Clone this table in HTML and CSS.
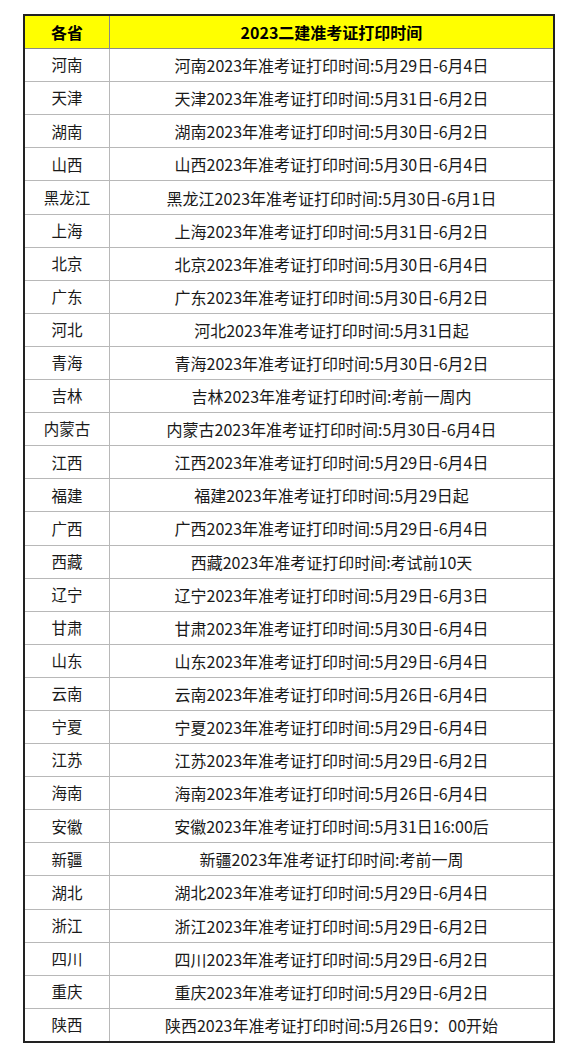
FILE: index.html
```html
<!DOCTYPE html>
<html lang="zh-CN">
<head>
<meta charset="utf-8">
<title>2023二建准考证打印时间</title>
<link rel="stylesheet" href="styles.css">
</head>
<body>
<table class="sheet">
  <thead>
    <tr class="head"><th class="prov">各省</th><th class="info">2023二建准考证打印时间</th></tr>
  </thead>
  <tbody>
    <tr><td class="prov">河南</td><td class="info">河南2023年准考证打印时间:5月29日-6月4日</td></tr>
    <tr><td class="prov">天津</td><td class="info">天津2023年准考证打印时间:5月31日-6月2日</td></tr>
    <tr><td class="prov">湖南</td><td class="info">湖南2023年准考证打印时间:5月30日-6月2日</td></tr>
    <tr><td class="prov">山西</td><td class="info">山西2023年准考证打印时间:5月30日-6月4日</td></tr>
    <tr><td class="prov">黑龙江</td><td class="info">黑龙江2023年准考证打印时间:5月30日-6月1日</td></tr>
    <tr><td class="prov">上海</td><td class="info">上海2023年准考证打印时间:5月31日-6月2日</td></tr>
    <tr><td class="prov">北京</td><td class="info">北京2023年准考证打印时间:5月30日-6月4日</td></tr>
    <tr><td class="prov">广东</td><td class="info">广东2023年准考证打印时间:5月30日-6月2日</td></tr>
    <tr><td class="prov">河北</td><td class="info">河北2023年准考证打印时间:5月31日起</td></tr>
    <tr><td class="prov">青海</td><td class="info">青海2023年准考证打印时间:5月30日-6月2日</td></tr>
    <tr><td class="prov">吉林</td><td class="info">吉林2023年准考证打印时间:考前一周内</td></tr>
    <tr><td class="prov">内蒙古</td><td class="info">内蒙古2023年准考证打印时间:5月30日-6月4日</td></tr>
    <tr><td class="prov">江西</td><td class="info">江西2023年准考证打印时间:5月29日-6月4日</td></tr>
    <tr><td class="prov">福建</td><td class="info">福建2023年准考证打印时间:5月29日起</td></tr>
    <tr><td class="prov">广西</td><td class="info">广西2023年准考证打印时间:5月29日-6月4日</td></tr>
    <tr><td class="prov">西藏</td><td class="info">西藏2023年准考证打印时间:考试前10天</td></tr>
    <tr><td class="prov">辽宁</td><td class="info">辽宁2023年准考证打印时间:5月29日-6月3日</td></tr>
    <tr><td class="prov">甘肃</td><td class="info">甘肃2023年准考证打印时间:5月30日-6月4日</td></tr>
    <tr><td class="prov">山东</td><td class="info">山东2023年准考证打印时间:5月29日-6月4日</td></tr>
    <tr><td class="prov">云南</td><td class="info">云南2023年准考证打印时间:5月26日-6月4日</td></tr>
    <tr><td class="prov">宁夏</td><td class="info">宁夏2023年准考证打印时间:5月29日-6月4日</td></tr>
    <tr><td class="prov">江苏</td><td class="info">江苏2023年准考证打印时间:5月29日-6月2日</td></tr>
    <tr><td class="prov">海南</td><td class="info">海南2023年准考证打印时间:5月26日-6月4日</td></tr>
    <tr><td class="prov">安徽</td><td class="info">安徽2023年准考证打印时间:5月31日16:00后</td></tr>
    <tr><td class="prov">新疆</td><td class="info">新疆2023年准考证打印时间:考前一周</td></tr>
    <tr><td class="prov">湖北</td><td class="info">湖北2023年准考证打印时间:5月29日-6月4日</td></tr>
    <tr><td class="prov">浙江</td><td class="info">浙江2023年准考证打印时间:5月29日-6月2日</td></tr>
    <tr><td class="prov">四川</td><td class="info">四川2023年准考证打印时间:5月29日-6月2日</td></tr>
    <tr><td class="prov">重庆</td><td class="info">重庆2023年准考证打印时间:5月29日-6月2日</td></tr>
    <tr><td class="prov">陕西</td><td class="info">陕西2023年准考证打印时间:5月26日9：00开始</td></tr>
  </tbody>
</table>
</body>
</html>
```
FILE: styles.css
```css
html, body {
  margin: 0;
  padding: 0;
  background: #ffffff;
}
body {
  padding: 14px 0 0 23px;
  font-family: "Noto Sans CJK SC", "Noto Sans", sans-serif;
  color: #1a1a1a;
}
.sheet {
  border-collapse: collapse;
  width: 532px;
  border: 2px solid #222222;
  table-layout: fixed;
}
.sheet th,
.sheet td {
  border: 1px solid #b8b8b8;
  height: 32.1px;
  padding: 0;
  text-align: center;
  vertical-align: middle;
  font-size: 16px;
  line-height: 1;
  white-space: nowrap;
}
.sheet td.prov {
  font-size: 15.5px;
}
.sheet .prov {
  width: 84px;
}
.head th {
  background: #ffff00;
  color: #000000;
  font-weight: 700;
  border-color: #8a8a8a;
  border-top-color: #222222;
}
```
